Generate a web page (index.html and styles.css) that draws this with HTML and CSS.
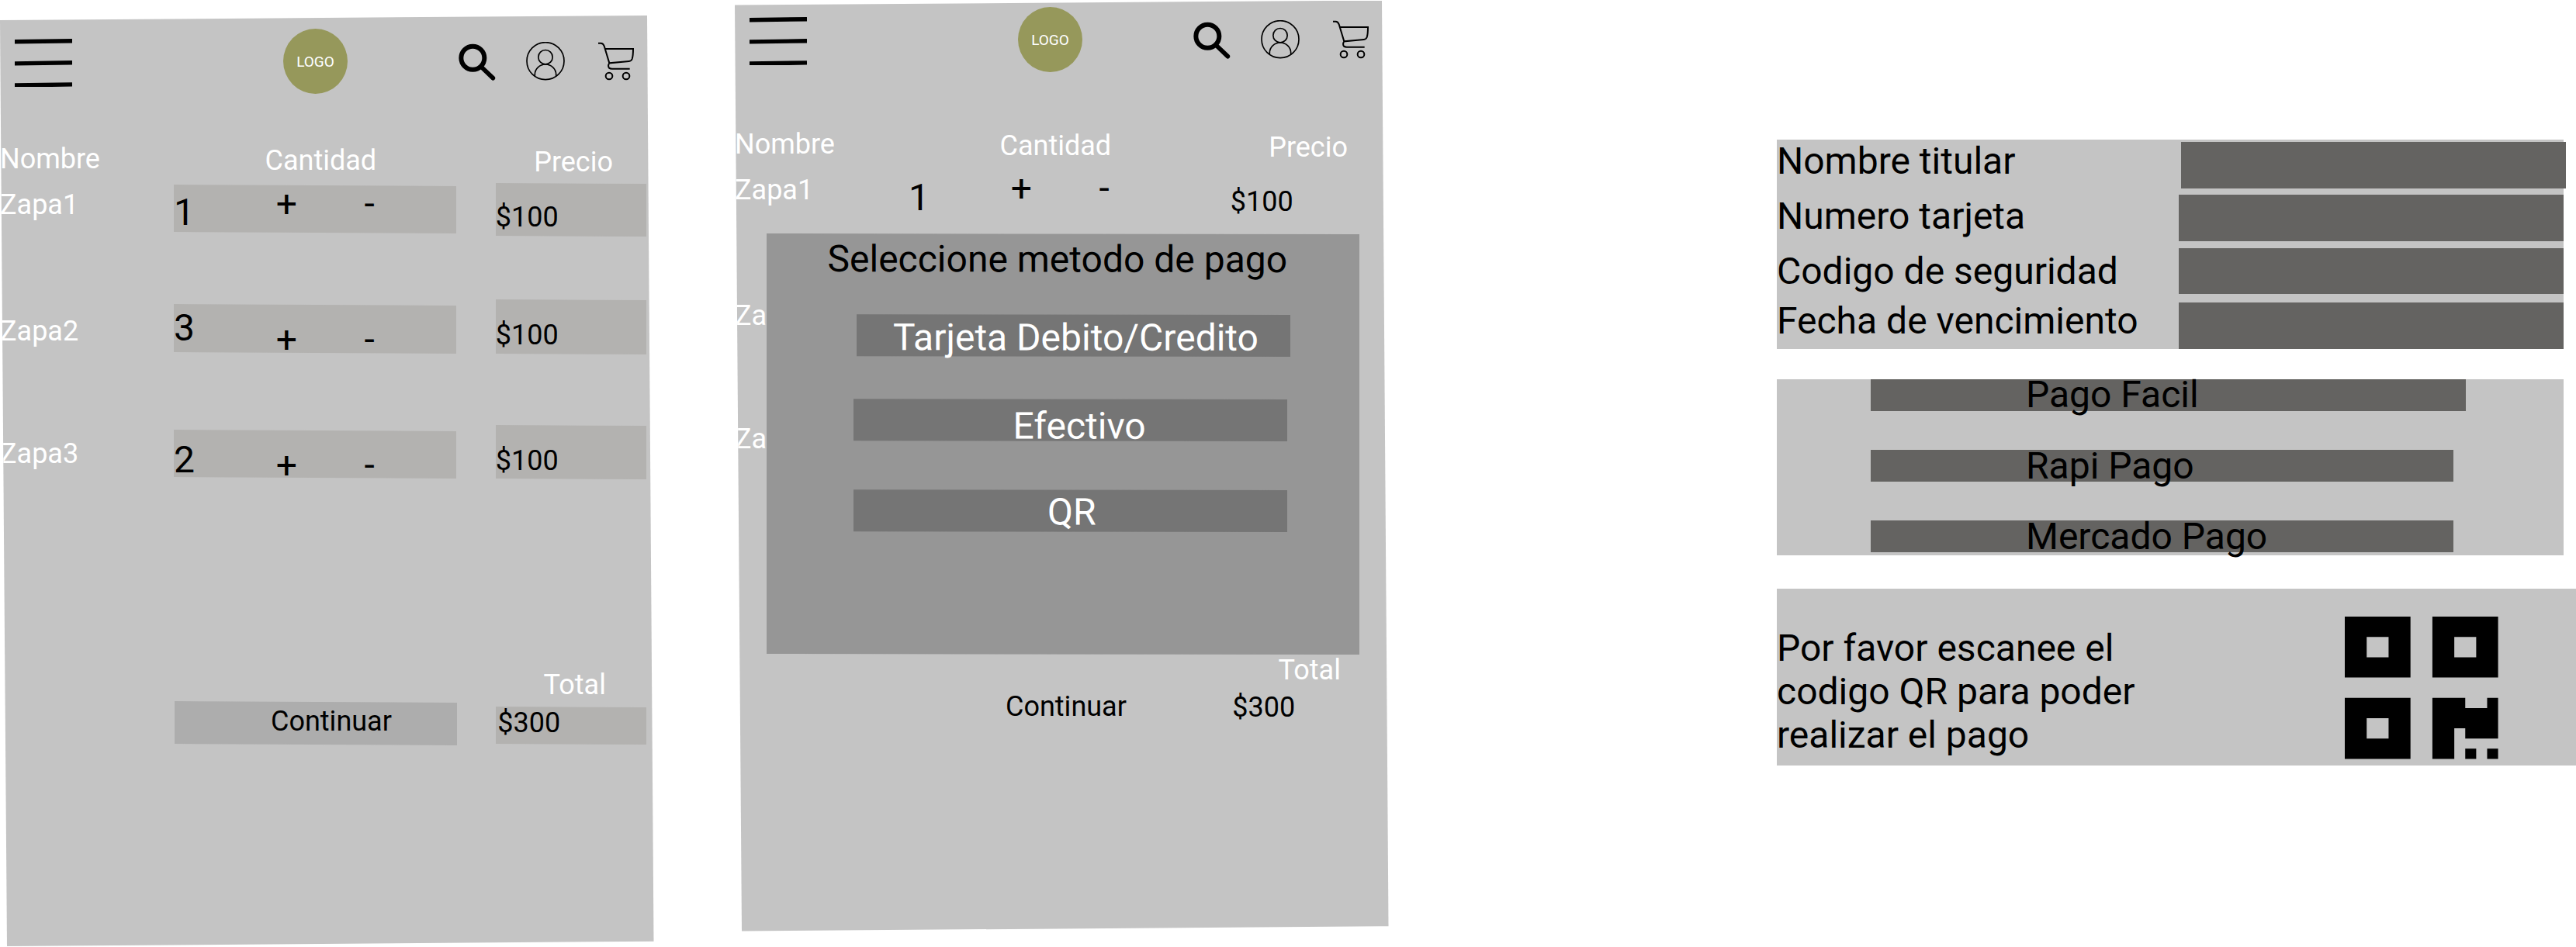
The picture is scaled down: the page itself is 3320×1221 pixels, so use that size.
FILE: index.html
```html
<!DOCTYPE html>
<html lang="es">
<head>
<meta charset="utf-8">
<title>Carrito y pago</title>
<link rel="stylesheet" href="styles.css">
</head>
<body>
<svg class="defs" width="0" height="0" aria-hidden="true">
  <symbol id="menu" viewBox="0 0 74 62"><path d="M0 3.8 74 2.7M0 31.9 74 30.8M0 60 74 58.9" stroke="#000" stroke-width="5.4"/></symbol>
  <symbol id="search" viewBox="60 72 150 150"><g fill="none" stroke="#000"><circle cx="118" cy="134" r="45" stroke-width="18"/><path d="M150 168 196 212" stroke-width="17" stroke-linecap="round"/></g></symbol>
  <symbol id="user" viewBox="324 72 150 150"><g fill="none" stroke="#000" stroke-width="5"><circle cx="399" cy="146" r="72"/><circle cx="399" cy="131" r="27.5"/><path d="M358 204V198A41 39 0 0 1 440 198V204"/></g></symbol>
  <symbol id="cart" viewBox="600 72 150 150"><g fill="none" stroke="#000" stroke-width="6"><path d="M603 77H613Q622 77 626 88L646 154 722 147Q731 146 734 138 738 126 738 99L629 98M646 154Q639 165 645 173 649 176 656 176H725"/><circle cx="645" cy="204" r="13"/><circle cx="711" cy="204" r="13"/></g></symbol>
</svg>
<main class="board">
  <section class="phone phone-cart">
    <header class="topbar">
      <svg class="menu"><use href="#menu"/></svg>
      <div class="logo">LOGO</div>
      <svg class="icon icon-search"><use href="#search"/></svg>
      <svg class="icon icon-user"><use href="#user"/></svg>
      <svg class="icon icon-cart"><use href="#cart"/></svg>
    </header>
    <div class="row heads"><span>Nombre</span><span class="head-qty">Cantidad</span><span class="head-price">Precio</span></div>
    <div class="row item item-1"><span class="name">Zapa1</span><div class="cell qty"><span class="num">1</span><span class="op plus">+</span><span class="op">-</span></div><div class="cell price">$100</div></div>
    <div class="row item item-2"><span class="name">Zapa2</span><div class="cell qty"><span class="num">3</span><span class="op plus">+</span><span class="op">-</span></div><div class="cell price">$100</div></div>
    <div class="row item item-3"><span class="name">Zapa3</span><div class="cell qty"><span class="num">2</span><span class="op plus">+</span><span class="op">-</span></div><div class="cell price">$100</div></div>
    <div class="total-label">Total</div>
    <div class="row footer"><span></span><div class="cell continue">Continuar</div><div class="cell total">$300</div></div>
  </section>

  <section class="phone phone-pay">
    <header class="topbar">
      <svg class="menu"><use href="#menu"/></svg>
      <div class="logo">LOGO</div>
      <svg class="icon icon-search"><use href="#search"/></svg>
      <svg class="icon icon-user"><use href="#user"/></svg>
      <svg class="icon icon-cart"><use href="#cart"/></svg>
    </header>
    <div class="row heads"><span>Nombre</span><span class="head-qty">Cantidad</span><span class="head-price">Precio</span></div>
    <div class="row item item-1"><span class="name">Zapa1</span><div class="cell qty"><span class="num">1</span><span class="op plus">+</span><span class="op">-</span></div><div class="cell price">$100</div></div>
    <div class="row item item-2"><span class="name">Za</span></div>
    <div class="row item item-3"><span class="name">Za</span></div>
    <div class="total-label">Total</div>
    <div class="row footer"><span></span><div class="cell continue">Continuar</div><div class="cell total">$300</div></div>
    <div class="modal">
      <h2>Seleccione metodo de pago</h2>
      <div class="option option-card">Tarjeta Debito/Credito</div>
      <div class="option option-cash">Efectivo</div>
      <div class="option option-qr">QR</div>
    </div>
  </section>

  <section class="methods">
    <div class="card card-form">
      <div class="labels"><span>Nombre titular</span><span class="l2">Numero tarjeta</span><span class="l3">Codigo de seguridad</span><span class="l4">Fecha de vencimiento</span></div>
      <div class="fields"><div class="field f1"></div><div class="field f2"></div><div class="field f3"></div><div class="field f4"></div></div>
    </div>
    <div class="card card-cash">
      <div class="bar bar-wide">Pago Facil</div>
      <div class="bar bar-mid">Rapi Pago</div>
      <div class="bar bar-low">Mercado Pago</div>
    </div>
    <div class="card card-qr">
      <p>Por favor escanee el<br>codigo QR para poder<br>realizar el pago</p>
      <svg class="qr" viewBox="0 0 14 14" preserveAspectRatio="none"><path fill-rule="evenodd" d="M0 0H6V6H0ZM2 2V4H4V2ZM8 0H14V6H8ZM10 2V4H12V2ZM0 8H6V14H0ZM2 10V12H4V10ZM8 8H11V9H13V8H14V12H11V11H10V14H8ZM11 13H12V14H11ZM13 13H14V14H13Z"/></svg>
    </div>
  </section>
</main>
</body>
</html>
```
FILE: styles.css
```css
* { box-sizing: border-box; }
body {
  margin: 0;
  background: #fff;
  font-family: Roboto, "Liberation Sans", sans-serif;
  font-size: 36px;
  line-height: 42px;
  color: #000;
  overflow: hidden;
}
.defs { position: absolute; }
.board { display: flex; align-items: flex-start; width: 3320px; height: 1221px; }

/* Phone screens */
.phone {
  position: relative;
  flex: none;
  width: 843px;
  height: 1200px;
  background: #c4c4c4;
  clip-path: polygon(0 6px, 834px 0, 842.5px 1193.7px, 9px 1200px);
}
.phone-cart { margin-top: 20px; }
.phone-pay { margin: 0.5px 0 0 104px; }

.topbar { display: flex; align-items: flex-start; height: 158px; padding: 17px 0 0 19px; }
.phone-pay .topbar { padding-top: 8.5px; }
.menu { width: 74px; height: 62px; margin-top: 13px; }
.logo {
  width: 83px;
  height: 84px;
  margin-left: 272px;
  border-radius: 50%;
  background: #96985b;
  color: #fff;
  font-size: 19px;
  line-height: 86px;
  text-align: center;
}
.icon { width: 50px; height: 50px; margin-top: 17px; }
.icon-search { margin-left: 142px; }
.icon-user { margin-left: 38px; }
.icon-cart { margin-left: 42px; }

.row { display: grid; grid-template-columns: 224px 364px 194px; align-items: start; }
.row > :nth-child(3) { margin-left: 50.7px; width: 194px; }
.heads { height: 58px; padding-top: 6.4px; color: #fff; }
.head-qty { padding: 1.8px 0 0 117.5px; }
.row > .head-price { padding: 3.8px 0 0 49.5px; }
.name { color: #fff; margin-top: var(--name-top); }

.item-1 { height: 150px; --name-top: 7.4px; --qty-top: 2px; --qty-h: 60.7px; --num-top: 8.3px; --op-top: -3.4px; --price-h: 67.5px; --price-pad: 22.7px; }
.item-2 { height: 162px; --name-top: 19.7px; --qty-top: 5.7px; --qty-h: 62.2px; --num-top: 3.2px; --op-top: 18.6px; --price-h: 70px; --price-pad: 25px; }
.item-3 { height: 314px; --name-top: 16.4px; --qty-top: 6px; --qty-h: 60.7px; --num-top: 11.3px; --op-top: 18.3px; --price-h: 69px; --price-pad: 25px; }

.cell { position: relative; isolation: isolate; }
.phone-cart .cell::before {
  content: "";
  position: absolute;
  inset: 0;
  z-index: -1;
  background: #b3b2b0;
  transform: skewY(0.31deg);
  transform-origin: left top;
}
.phone-cart .continue::before { background: #adadad; }
.qty { display: flex; align-items: flex-start; height: var(--qty-h); margin-top: var(--qty-top); font-size: 48px; line-height: 56px; }
.num { width: 131.8px; margin-top: var(--num-top); }
.op { margin-top: var(--op-top); }
.plus { width: 113.7px; }
.price { height: var(--price-h); padding-top: var(--price-pad); }

.total-label { height: 41.7px; padding-left: 700.5px; color: #fff; }
.continue { left: 1px; height: 55px; padding: 5.7px 0 0 124px; }
.total { height: 48px; margin-top: 7.3px; padding-left: 2.5px; }

/* Payment dialog over the second screen */
.modal {
  position: absolute;
  left: 40.5px;
  top: 300.5px;
  width: 763.5px;
  height: 541.5px;
  padding-top: 4.6px;
  background: #969696;
  transform: skewY(0.08deg);
  transform-origin: left top;
  font-size: 48px;
  line-height: 56px;
}
.modal h2 { margin: 0 0 43.9px; padding-left: 78.5px; font: inherit; white-space: nowrap; }
.option { width: 559px; height: 54px; margin-left: 111.5px; background: #757575; color: #fff; white-space: nowrap; }
.option-card { margin-left: 115.5px; padding: 1.6px 0 0 47.6px; }
.option-cash { margin-top: 55px; padding: 6.6px 0 0 206px; }
.option-qr { margin-top: 63px; padding: 0.6px 0 0 250.5px; }

/* Payment method panels */
.methods { flex: none; width: 1030px; margin: 180.4px 0 0 500px; font-size: 48px; line-height: 56px; }
.card { width: 1014px; background: #c4c4c4; }
.card-form { display: flex; height: 269.2px; }
.labels { display: flex; flex: none; flex-direction: column; width: 517.7px; white-space: nowrap; }
.l2 { margin-top: 15px; }
.l3 { margin-top: 14.7px; }
.l4 { margin-top: 8.3px; }
.fields { flex: none; width: 496.3px; padding-top: 2.9px; }
.field { width: 496.3px; background: #646361; }
.f1 { height: 59.3px; margin-left: 3.3px; }
.f2 { height: 59.7px; margin-top: 8.7px; }
.f3 { height: 58.4px; margin-top: 9.3px; }
.f4 { height: 59.6px; margin-top: 11.3px; }

.card-cash { height: 226.7px; margin-top: 39.7px; padding-left: 121.3px; }
.bar { width: 750.7px; height: 40.6px; padding-left: 199.7px; background: #646361; line-height: 40.6px; }
.bar-wide { width: 766.7px; line-height: 39.6px; }
.bar-mid { margin-top: 50.1px; line-height: 42.2px; }
.bar-low { margin-top: 50.4px; line-height: 42.6px; }

.card-qr { display: flex; width: 1030px; height: 227.3px; margin-top: 43.3px; }
.card-qr p { width: 732px; margin: 49px 0 0; }
.qr { width: 197.6px; height: 183.4px; margin-top: 36px; }
```
